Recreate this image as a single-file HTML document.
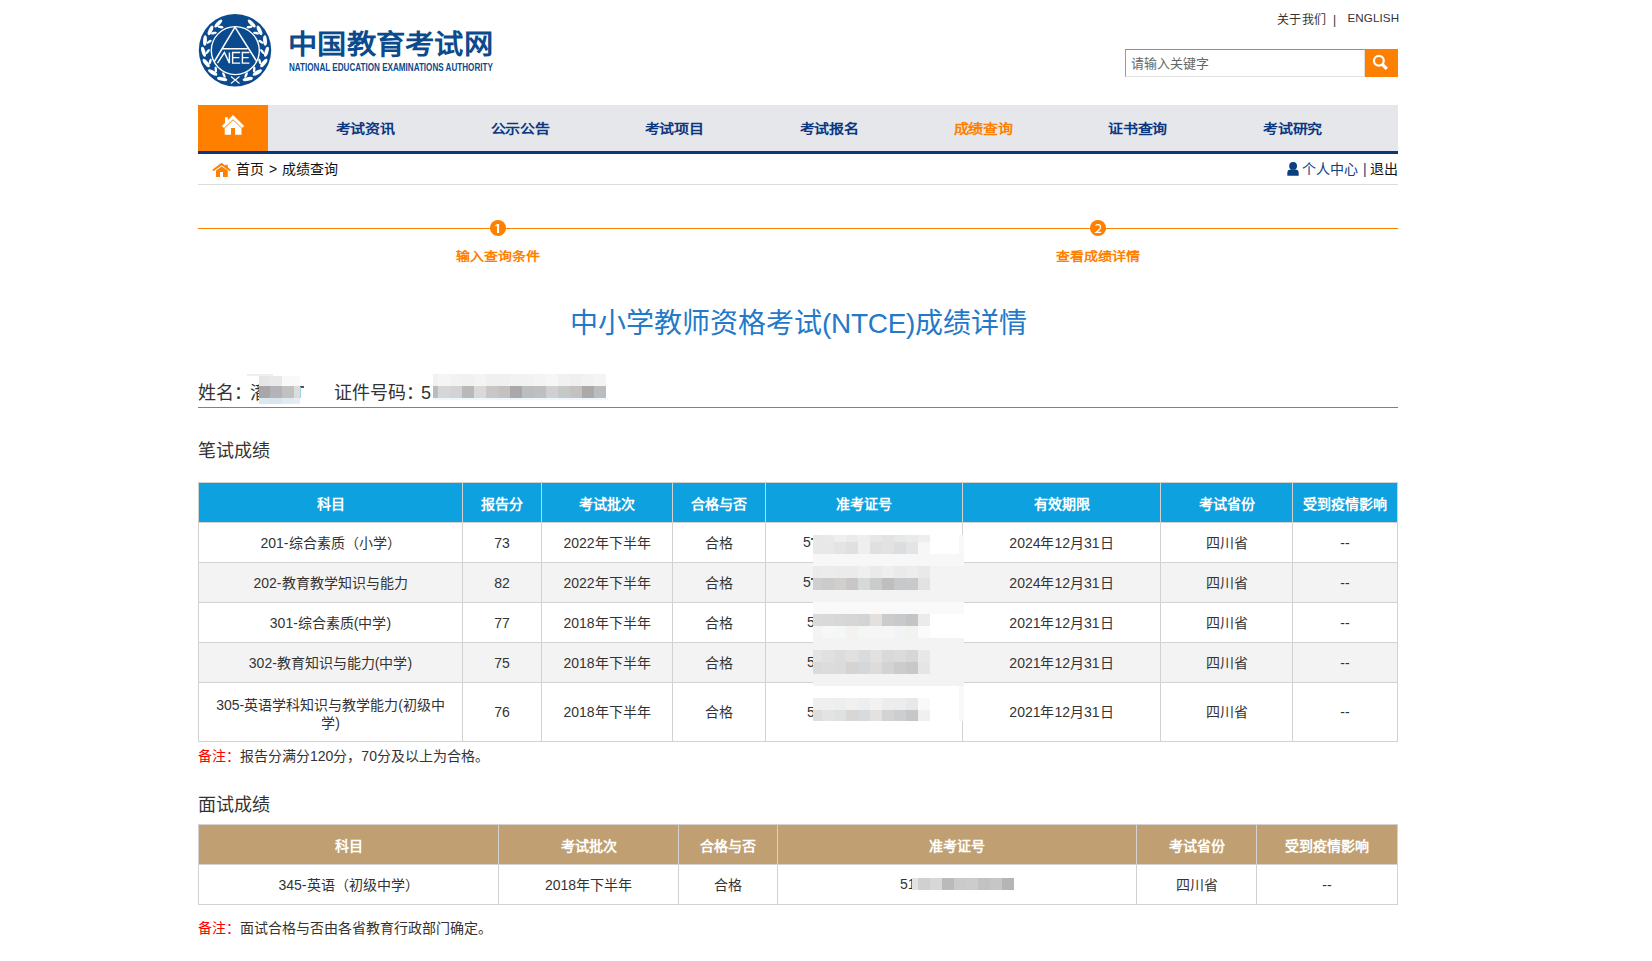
<!DOCTYPE html>
<html lang="zh-CN">
<head>
<meta charset="utf-8">
<style>
*{margin:0;padding:0;box-sizing:border-box;}
html,body{width:1652px;height:961px;overflow:hidden;background:#fff;}
body{font-family:"Liberation Sans",sans-serif;color:#333;position:relative;}
.abs{position:absolute;white-space:nowrap;}
.tl{top:10.5px;font-size:12px;line-height:18px;color:#333;}
#search{left:1125px;top:49px;width:240px;height:28px;border:1px solid;border-color:#8f8f8f #dcdcdc #e0e0e0 #9a9a9a;background:#fff;}
#search span{position:absolute;left:5px;top:5.5px;font-size:13px;line-height:16px;color:#666;}
#sbtn{left:1365px;top:49px;width:33px;height:28px;background:#ff7f00;}
#nav{left:198px;top:105px;width:1200px;height:46px;background:#e6e7eb;}
#navline{left:198px;top:151px;width:1200px;height:3px;background:#073a7d;}
#home{left:198px;top:105px;width:70px;height:46px;background:#ff7f00;}
.nv{top:118px;font-size:15px;line-height:22px;font-weight:bold;color:#0b3781;transform:scaleY(0.85);transform-origin:0 50%;letter-spacing:-0.2px;}
#crumbline{left:198px;top:184px;width:1200px;height:1px;background:#dcdcdc;}
.crumbt{top:160px;font-size:14px;line-height:18px;color:#111;}
#user{right:254px;top:160px;font-size:14px;line-height:18px;color:#222;}
#stepline{left:198px;top:228px;width:1200px;height:1px;background:#ff8000;}
.dot{width:16px;height:16px;border-radius:50%;background:#ff7f00;color:#fff;font-size:12px;line-height:16px;text-align:center;font-weight:bold;top:220px;font-family:"Liberation Sans",sans-serif;}
.steplbl{top:247px;font-size:14px;line-height:18px;font-weight:bold;color:#ff7f00;transform:scaleY(0.88);transform-origin:0 100%;}
#title{left:570px;top:305px;font-size:28px;line-height:38px;color:#2479c9;}
.info{top:381.5px;font-size:18px;line-height:22px;color:#333;}
#infoline{left:198px;top:407px;width:1200px;height:1px;background:#00adee;}
.sec{left:198px;font-size:18px;line-height:22px;color:#333;}
table{position:absolute;left:198px;width:1199px;border-collapse:collapse;table-layout:fixed;font-size:14px;color:#333;}
td,th{border:1px solid #d2d2d2;text-align:center;vertical-align:middle;}
th{color:#fff;font-weight:bold;height:40px;}
td{height:40px;line-height:18px;}
#t1{top:482px;}
#t1 th{background:#0ea1e0;}
#t2{top:824px;}
#t2 th{background:#c0a073;}
tr.g td{background:#f3f3f3;}
.mz{position:absolute;}
.cell{font-size:14px;line-height:18px;color:#333;}
.note{left:198px;font-size:14px;line-height:18px;color:#333;}
.note b{color:#f00;font-weight:normal;}
</style>
</head>
<body>
<!-- logo -->
<svg class="abs" style="left:197px;top:12px" width="78" height="78" viewBox="0 0 78 78">
  <circle cx="38" cy="38.2" r="36.2" fill="#0b4a8d"/>
  <g fill="#fff"><ellipse cx="25.2" cy="67.0" rx="5.2" ry="1.9" transform="rotate(190 25.2 67.0)"/><ellipse cx="26.9" cy="63.0" rx="3.0" ry="1.25" transform="rotate(244 26.9 63.0)"/><ellipse cx="15.7" cy="60.5" rx="5.2" ry="1.9" transform="rotate(211 15.7 60.5)"/><ellipse cx="18.8" cy="57.4" rx="3.0" ry="1.25" transform="rotate(265 18.8 57.4)"/><ellipse cx="9.2" cy="51.0" rx="5.2" ry="1.9" transform="rotate(232 9.2 51.0)"/><ellipse cx="13.2" cy="49.3" rx="3.0" ry="1.25" transform="rotate(286 13.2 49.3)"/><ellipse cx="6.5" cy="39.8" rx="5.2" ry="1.9" transform="rotate(253 6.5 39.8)"/><ellipse cx="10.8" cy="39.6" rx="3.0" ry="1.25" transform="rotate(307 10.8 39.6)"/><ellipse cx="8.0" cy="28.5" rx="5.2" ry="1.9" transform="rotate(274 8.0 28.5)"/><ellipse cx="12.1" cy="29.8" rx="3.0" ry="1.25" transform="rotate(328 12.1 29.8)"/><ellipse cx="13.5" cy="18.4" rx="5.2" ry="1.9" transform="rotate(295 13.5 18.4)"/><ellipse cx="16.9" cy="21.1" rx="3.0" ry="1.25" transform="rotate(349 16.9 21.1)"/><ellipse cx="21.3" cy="11.5" rx="5.2" ry="1.9" transform="rotate(314 21.3 11.5)"/><ellipse cx="23.6" cy="15.1" rx="3.0" ry="1.25" transform="rotate(368 23.6 15.1)"/><ellipse cx="50.8" cy="67.0" rx="5.2" ry="1.9" transform="rotate(-10 50.8 67.0)"/><ellipse cx="49.1" cy="63.0" rx="3.0" ry="1.25" transform="rotate(-64 49.1 63.0)"/><ellipse cx="60.3" cy="60.5" rx="5.2" ry="1.9" transform="rotate(-31 60.3 60.5)"/><ellipse cx="57.2" cy="57.4" rx="3.0" ry="1.25" transform="rotate(-85 57.2 57.4)"/><ellipse cx="66.8" cy="51.0" rx="5.2" ry="1.9" transform="rotate(-52 66.8 51.0)"/><ellipse cx="62.8" cy="49.3" rx="3.0" ry="1.25" transform="rotate(-106 62.8 49.3)"/><ellipse cx="69.5" cy="39.8" rx="5.2" ry="1.9" transform="rotate(-73 69.5 39.8)"/><ellipse cx="65.2" cy="39.6" rx="3.0" ry="1.25" transform="rotate(-127 65.2 39.6)"/><ellipse cx="68.0" cy="28.5" rx="5.2" ry="1.9" transform="rotate(-94 68.0 28.5)"/><ellipse cx="63.9" cy="29.8" rx="3.0" ry="1.25" transform="rotate(-148 63.9 29.8)"/><ellipse cx="62.5" cy="18.4" rx="5.2" ry="1.9" transform="rotate(-115 62.5 18.4)"/><ellipse cx="59.1" cy="21.1" rx="3.0" ry="1.25" transform="rotate(-169 59.1 21.1)"/><ellipse cx="54.7" cy="11.5" rx="5.2" ry="1.9" transform="rotate(-134 54.7 11.5)"/><ellipse cx="52.4" cy="15.1" rx="3.0" ry="1.25" transform="rotate(-188 52.4 15.1)"/></g>
  <circle cx="38.3" cy="38.6" r="24" fill="none" stroke="#fff" stroke-width="1.4"/>
  <path d="M17.4,49.5 L38,15.2 L59.8,49.5 M24.9,36.7 H50.5" fill="none" stroke="#fff" stroke-width="1.5"/>
  <path d="M20.5,51.1 L27.4,40.5 L32.4,51.1 L32.4,40.5 M43.2,40.5 H35.6 V51.1 H43.2 M35.6,45.6 H42.4 M52.4,40.5 H45.4 V51.1 H52.4 M45.4,45.6 H51.6" fill="none" stroke="#fff" stroke-width="1.4"/>
  <path d="M34,64.5 L42.5,71.5 M42.5,64.5 L34,71.5" stroke="#fff" stroke-width="1.1"/>
</svg>
<div class="abs" id="logotxt" style="left:288px;top:29px;font-size:29px;line-height:34px;font-weight:900;color:#0b4a8c;transform:scale(1.01,0.93);transform-origin:0 0;">中国教育考试网</div>
<div class="abs" id="entxt" style="left:289px;top:62px;font-size:10px;line-height:11px;font-weight:bold;color:#0b4a8c;transform:scaleX(0.81);transform-origin:0 0;">NATIONAL EDUCATION EXAMINATIONS AUTHORITY</div>

<div class="abs tl" style="left:1277px;letter-spacing:0.3px">关于我们</div><div class="abs tl" style="left:1333px">|</div><div class="abs tl" style="left:1347.5px;top:9px;font-size:11.6px;letter-spacing:0.1px">ENGLISH</div>
<div class="abs" id="search"><span>请输入关键字</span></div>
<div class="abs" id="sbtn"><svg width="33" height="28" viewBox="0 0 33 28"><circle cx="13.9" cy="11.8" r="4.9" fill="none" stroke="#fff" stroke-width="2.2"/><path d="M17.3,15.3 L21.8,19.8" stroke="#fff" stroke-width="3.2"/></svg></div>

<div class="abs" id="nav"></div>
<div class="abs" id="home"></div>
<svg class="abs" style="left:215px;top:108px" width="35" height="32" viewBox="0 0 35 32"><path d="M7.9,19 L18,9.1 L28.1,19" fill="none" stroke="#fff" stroke-width="3"/><rect x="10" y="9.2" width="2.8" height="6" fill="#fff"/><path d="M9.7,26.8 V20.3 L18,12.3 L26.5,20.3 V26.8 H20 V20 H16 V26.8 Z" fill="#fff"/></svg>
<div class="abs" id="navline"></div>
<div class="abs nv" style="left:335.5px">考试资讯</div>
<div class="abs nv" style="left:490.5px">公示公告</div>
<div class="abs nv" style="left:644.5px">考试项目</div>
<div class="abs nv" style="left:799.5px">考试报名</div>
<div class="abs nv" style="left:953.5px;color:#ff7f00">成绩查询</div>
<div class="abs nv" style="left:1108px">证书查询</div>
<div class="abs nv" style="left:1263px">考试研究</div>

<svg class="abs" style="left:208px;top:158px" width="32" height="24" viewBox="0 0 32 24"><path d="M5.5,12 L13.6,6.1 L21.7,12" fill="none" stroke="#ff7f00" stroke-width="2" stroke-linecap="round"/><rect x="17.5" y="6.8" width="2.3" height="3.5" fill="#ff7f00"/><path d="M8,19 V12.4 L13.7,8.4 L19.75,12.4 V19 H15 V14 H12 V19 Z" fill="#ff7f00"/></svg>
<div class="abs crumbt" style="left:235.5px">首页</div><div class="abs crumbt" style="left:269px">&gt;</div><div class="abs crumbt" style="left:281.5px">成绩查询</div>
<svg class="abs" style="left:1285px;top:160px" width="16" height="18" viewBox="1285 160 16 18"><circle cx="1293.1" cy="165.9" r="3.9" fill="#0b3f80"/><path d="M1287.3,175.7 V173 Q1287.3,169.6 1290.8,169.6 H1295.2 Q1298.7,169.6 1298.7,173 V175.7 Z" fill="#0b3f80"/></svg>
<div class="abs crumbt" style="left:1302px;color:#0b3f80">个人中心</div><div class="abs crumbt" style="left:1363px;color:#0b3f80">|</div><div class="abs crumbt" style="left:1370px">退出</div>
<div class="abs" id="crumbline"></div>

<div class="abs" id="stepline"></div>
<div class="abs dot" style="left:490px"></div><svg class="abs" style="left:490px;top:220px" width="16" height="16" viewBox="490 220 16 16"><path d="M497,224 H499.1 V233 H497 V226.2 L495.2,226.2 L495.2,225.3 Q496.6,225 497,224 Z" fill="#fff"/></svg>
<div class="abs dot" style="left:1090px"></div><svg class="abs" style="left:1090px;top:220px" width="16" height="16" viewBox="1090 220 16 16"><path d="M1095.4,225.6 Q1096.5,224.6 1098,224.6 Q1100.6,224.6 1100.6,226.9 Q1100.6,228.6 1098.3,230.5 L1096,232.4 H1101.1" fill="none" stroke="#fff" stroke-width="1.25"/></svg>
<div class="abs steplbl" style="left:456px">输入查询条件</div>
<div class="abs steplbl" style="left:1056px">查看成绩详情</div>

<div class="abs" id="title">中小学教师资格考试<span style="letter-spacing:-0.3px">(NTCE)</span>成绩详情</div>
<div class="abs info" style="left:198px">姓名：</div><div class="abs info" style="left:250px">潘</div><div class="abs info" style="left:334px">证件号码：</div><div class="abs info" style="left:421px">5</div>
<div class="abs" id="infoline"></div>

<div class="abs sec" style="top:440px">笔试成绩</div>
<table id="t1">
<colgroup><col style="width:264px"><col style="width:79px"><col style="width:131px"><col style="width:93px"><col style="width:197px"><col style="width:198px"><col style="width:132px"><col style="width:105px"></colgroup>
<tr><th>科目</th><th>报告分</th><th>考试批次</th><th>合格与否</th><th>准考证号</th><th>有效期限</th><th>考试省份</th><th>受到疫情影响</th></tr>
<tr><td>201-综合素质（小学）</td><td>73</td><td>2022年下半年</td><td>合格</td><td></td><td>2024年12月31日</td><td>四川省</td><td>--</td></tr>
<tr class="g"><td>202-教育教学知识与能力</td><td>82</td><td>2022年下半年</td><td>合格</td><td></td><td>2024年12月31日</td><td>四川省</td><td>--</td></tr>
<tr><td>301-综合素质(中学)</td><td>77</td><td>2018年下半年</td><td>合格</td><td></td><td>2021年12月31日</td><td>四川省</td><td>--</td></tr>
<tr class="g"><td>302-教育知识与能力(中学)</td><td>75</td><td>2018年下半年</td><td>合格</td><td></td><td>2021年12月31日</td><td>四川省</td><td>--</td></tr>
<tr><td style="height:59px;padding-top:3px">305-英语学科知识与教学能力(初级中<br>学)</td><td>76</td><td>2018年下半年</td><td>合格</td><td></td><td>2021年12月31日</td><td>四川省</td><td>--</td></tr>
</table>
<div class="abs note" style="top:747px"><b>备注：</b>报告分满分120分，70分及以上为合格。</div>

<div class="abs sec" style="top:793.5px">面试成绩</div>
<table id="t2">
<colgroup><col style="width:300px"><col style="width:180px"><col style="width:99px"><col style="width:359px"><col style="width:120px"><col style="width:141px"></colgroup>
<tr><th>科目</th><th>考试批次</th><th>合格与否</th><th>准考证号</th><th>考试省份</th><th>受到疫情影响</th></tr>
<tr><td>345-英语（初级中学）</td><td>2018年下半年</td><td>合格</td><td></td><td>四川省</td><td>--</td></tr>
</table>
<div class="abs note" style="top:919px"><b>备注：</b>面试合格与否由各省教育行政部门确定。</div>
<div class="abs cell" style="left:803px;top:533px">5</div><div class="abs cell" style="left:803px;top:573px">5</div><div class="abs cell" style="left:807px;top:613px">5</div><div class="abs cell" style="left:807px;top:653px">5</div><div class="abs cell" style="left:807px;top:703px">5</div><div class="mz" style="left:811px;top:538px;width:1.5px;height:1.5px;background:#555"></div><div class="mz" style="left:811px;top:578px;width:1.5px;height:1.5px;background:#555"></div><div class="abs cell" style="left:900px;top:875px">51</div><div class="mz" style="left:247px;top:374px;width:26px;height:2px;background:#eeeeee"></div><div class="mz" style="left:259px;top:376px;width:11px;height:10px;background:#e6e6e6"></div><div class="mz" style="left:270px;top:376px;width:12px;height:10px;background:#e9e9e9"></div><div class="mz" style="left:282px;top:376px;width:12px;height:10px;background:#f9f9f9"></div><div class="mz" style="left:294px;top:376px;width:6px;height:10px;background:#f9f9f9"></div><div class="mz" style="left:259px;top:386px;width:11px;height:12px;background:#a9a7a6"></div><div class="mz" style="left:270px;top:386px;width:12px;height:12px;background:#b4b4b8"></div><div class="mz" style="left:282px;top:386px;width:12px;height:12px;background:#c1c1c1"></div><div class="mz" style="left:294px;top:386px;width:6px;height:12px;background:#dddcdc"></div><div class="mz" style="left:259px;top:398px;width:11px;height:6px;background:#dce8ef"></div><div class="mz" style="left:270px;top:398px;width:12px;height:6px;background:#d8e5ed"></div><div class="mz" style="left:282px;top:398px;width:12px;height:6px;background:#e0ecf2"></div><div class="mz" style="left:294px;top:398px;width:6px;height:6px;background:#e2eef4"></div><div class="mz" style="left:300px;top:386px;width:4px;height:1.5px;background:#555"></div><div class="mz" style="left:300px;top:387px;width:1px;height:11px;background:#9bd4f0"></div><div class="mz" style="left:433px;top:374px;width:5px;height:12px;background:#f1f1f1"></div><div class="mz" style="left:438px;top:374px;width:12px;height:12px;background:#f5f5f5"></div><div class="mz" style="left:450px;top:374px;width:12px;height:12px;background:#f2f2f2"></div><div class="mz" style="left:462px;top:374px;width:12px;height:12px;background:#f1f1f1"></div><div class="mz" style="left:474px;top:374px;width:12px;height:12px;background:#f4f4f3"></div><div class="mz" style="left:486px;top:374px;width:12px;height:12px;background:#f0f0f0"></div><div class="mz" style="left:498px;top:374px;width:12px;height:12px;background:#f0f0f0"></div><div class="mz" style="left:510px;top:374px;width:12px;height:12px;background:#f1f2f2"></div><div class="mz" style="left:522px;top:374px;width:12px;height:12px;background:#f2f2f2"></div><div class="mz" style="left:534px;top:374px;width:12px;height:12px;background:#f4f4f4"></div><div class="mz" style="left:546px;top:374px;width:12px;height:12px;background:#f6f6f6"></div><div class="mz" style="left:558px;top:374px;width:12px;height:12px;background:#f1f1f1"></div><div class="mz" style="left:570px;top:374px;width:12px;height:12px;background:#efefef"></div><div class="mz" style="left:582px;top:374px;width:12px;height:12px;background:#f1f2f2"></div><div class="mz" style="left:594px;top:374px;width:12px;height:12px;background:#f4f4f4"></div><div class="mz" style="left:433px;top:386px;width:5px;height:12px;background:#bcbcbe"></div><div class="mz" style="left:438px;top:386px;width:12px;height:12px;background:#d6d6d6"></div><div class="mz" style="left:450px;top:386px;width:12px;height:12px;background:#d3d3d3"></div><div class="mz" style="left:462px;top:386px;width:12px;height:12px;background:#b9b9b9"></div><div class="mz" style="left:474px;top:386px;width:12px;height:12px;background:#d9d9da"></div><div class="mz" style="left:486px;top:386px;width:12px;height:12px;background:#c8c6c7"></div><div class="mz" style="left:498px;top:386px;width:12px;height:12px;background:#c3c2c1"></div><div class="mz" style="left:510px;top:386px;width:12px;height:12px;background:#aaa8a9"></div><div class="mz" style="left:522px;top:386px;width:12px;height:12px;background:#bbbdbf"></div><div class="mz" style="left:534px;top:386px;width:12px;height:12px;background:#c0bfbf"></div><div class="mz" style="left:546px;top:386px;width:12px;height:12px;background:#d0d0d0"></div><div class="mz" style="left:558px;top:386px;width:12px;height:12px;background:#c6c7c7"></div><div class="mz" style="left:570px;top:386px;width:12px;height:12px;background:#c4c2c1"></div><div class="mz" style="left:582px;top:386px;width:12px;height:12px;background:#aba9aa"></div><div class="mz" style="left:594px;top:386px;width:12px;height:12px;background:#babcbd"></div><div class="mz" style="left:433px;top:398px;width:175px;height:2px;background:#eef7fc"></div><div class="mz" style="left:813px;top:535px;width:151px;height:19px;background:#fff"></div><div class="mz" style="left:959px;top:535px;width:5px;height:186px;background:#f8f8f8"></div><div class="mz" style="left:813px;top:554px;width:151px;height:12px;background:#f7f7f7"></div><div class="mz" style="left:813px;top:535px;width:9px;height:7px;background:#e8e8e8"></div><div class="mz" style="left:822px;top:535px;width:12px;height:7px;background:#e9e9e9"></div><div class="mz" style="left:834px;top:535px;width:12px;height:7px;background:#efefef"></div><div class="mz" style="left:846px;top:535px;width:12px;height:7px;background:#eaeae9"></div><div class="mz" style="left:858px;top:535px;width:12px;height:7px;background:#eceef0"></div><div class="mz" style="left:870px;top:535px;width:12px;height:7px;background:#e8e7e5"></div><div class="mz" style="left:882px;top:535px;width:12px;height:7px;background:#e4e3e1"></div><div class="mz" style="left:894px;top:535px;width:12px;height:7px;background:#e6e7e8"></div><div class="mz" style="left:906px;top:535px;width:12px;height:7px;background:#e9eaea"></div><div class="mz" style="left:918px;top:535px;width:12px;height:7px;background:#eeeeee"></div><div class="mz" style="left:813px;top:542px;width:9px;height:12px;background:#e8e8e8"></div><div class="mz" style="left:822px;top:542px;width:12px;height:12px;background:#e8e8e8"></div><div class="mz" style="left:834px;top:542px;width:12px;height:12px;background:#e5e4e3"></div><div class="mz" style="left:846px;top:542px;width:12px;height:12px;background:#dfe0e0"></div><div class="mz" style="left:858px;top:542px;width:12px;height:12px;background:#efefee"></div><div class="mz" style="left:870px;top:542px;width:12px;height:12px;background:#dfe0e2"></div><div class="mz" style="left:882px;top:542px;width:12px;height:12px;background:#e3e2e0"></div><div class="mz" style="left:894px;top:542px;width:12px;height:12px;background:#dcdddf"></div><div class="mz" style="left:906px;top:542px;width:12px;height:12px;background:#e3e4e6"></div><div class="mz" style="left:918px;top:542px;width:12px;height:12px;background:#f7f7f7"></div><div class="mz" style="left:813px;top:566px;width:151px;height:36px;background:#f3f3f3"></div><div class="mz" style="left:813px;top:566px;width:9px;height:12px;background:#ebebeb"></div><div class="mz" style="left:822px;top:566px;width:12px;height:12px;background:#ececec"></div><div class="mz" style="left:834px;top:566px;width:12px;height:12px;background:#ebebeb"></div><div class="mz" style="left:846px;top:566px;width:12px;height:12px;background:#eaebea"></div><div class="mz" style="left:858px;top:566px;width:12px;height:12px;background:#efefef"></div><div class="mz" style="left:870px;top:566px;width:12px;height:12px;background:#eaeaea"></div><div class="mz" style="left:882px;top:566px;width:12px;height:12px;background:#edeeed"></div><div class="mz" style="left:894px;top:566px;width:12px;height:12px;background:#eaeaea"></div><div class="mz" style="left:906px;top:566px;width:12px;height:12px;background:#ecedec"></div><div class="mz" style="left:918px;top:566px;width:12px;height:12px;background:#e9e9e9"></div><div class="mz" style="left:813px;top:578px;width:9px;height:12px;background:#cfcfcf"></div><div class="mz" style="left:822px;top:578px;width:12px;height:12px;background:#cbcbcb"></div><div class="mz" style="left:834px;top:578px;width:12px;height:12px;background:#d0cfce"></div><div class="mz" style="left:846px;top:578px;width:12px;height:12px;background:#c8c7c6"></div><div class="mz" style="left:858px;top:578px;width:12px;height:12px;background:#d7d8d8"></div><div class="mz" style="left:870px;top:578px;width:12px;height:12px;background:#cacbcb"></div><div class="mz" style="left:882px;top:578px;width:12px;height:12px;background:#c0bebc"></div><div class="mz" style="left:894px;top:578px;width:12px;height:12px;background:#c7c8ca"></div><div class="mz" style="left:906px;top:578px;width:12px;height:12px;background:#c8c9cb"></div><div class="mz" style="left:918px;top:578px;width:12px;height:12px;background:#e2e2e2"></div><div class="mz" style="left:813px;top:602px;width:151px;height:12px;background:#f9f9f9"></div><div class="mz" style="left:813px;top:614px;width:151px;height:24px;background:#fff"></div><div class="mz" style="left:813px;top:614px;width:9px;height:12px;background:#d9dadb"></div><div class="mz" style="left:822px;top:614px;width:12px;height:12px;background:#d9d9d9"></div><div class="mz" style="left:834px;top:614px;width:12px;height:12px;background:#d6d7d8"></div><div class="mz" style="left:846px;top:614px;width:12px;height:12px;background:#d8d6d5"></div><div class="mz" style="left:858px;top:614px;width:12px;height:12px;background:#d3d4d6"></div><div class="mz" style="left:870px;top:614px;width:12px;height:12px;background:#e3e0de"></div><div class="mz" style="left:882px;top:614px;width:12px;height:12px;background:#cbcbcb"></div><div class="mz" style="left:894px;top:614px;width:12px;height:12px;background:#c7cacc"></div><div class="mz" style="left:906px;top:614px;width:12px;height:12px;background:#c4c4c4"></div><div class="mz" style="left:918px;top:614px;width:12px;height:12px;background:#eaebec"></div><div class="mz" style="left:813px;top:626px;width:9px;height:12px;background:#f4f4f4"></div><div class="mz" style="left:822px;top:626px;width:12px;height:12px;background:#f7f7f7"></div><div class="mz" style="left:834px;top:626px;width:12px;height:12px;background:#f5f6f6"></div><div class="mz" style="left:846px;top:626px;width:12px;height:12px;background:#f3f2f1"></div><div class="mz" style="left:858px;top:626px;width:12px;height:12px;background:#f4f5f5"></div><div class="mz" style="left:870px;top:626px;width:12px;height:12px;background:#f5f5f5"></div><div class="mz" style="left:882px;top:626px;width:12px;height:12px;background:#f6f6f5"></div><div class="mz" style="left:894px;top:626px;width:12px;height:12px;background:#f1f3f4"></div><div class="mz" style="left:906px;top:626px;width:12px;height:12px;background:#f2f2f1"></div><div class="mz" style="left:918px;top:626px;width:12px;height:12px;background:#fbfbfb"></div><div class="mz" style="left:813px;top:638px;width:151px;height:48px;background:#f3f3f3"></div><div class="mz" style="left:813px;top:650px;width:9px;height:12px;background:#e4e4e4"></div><div class="mz" style="left:822px;top:650px;width:12px;height:12px;background:#e0e0e0"></div><div class="mz" style="left:834px;top:650px;width:12px;height:12px;background:#dcdcdd"></div><div class="mz" style="left:846px;top:650px;width:12px;height:12px;background:#e0e0e0"></div><div class="mz" style="left:858px;top:650px;width:12px;height:12px;background:#dadbdc"></div><div class="mz" style="left:870px;top:650px;width:12px;height:12px;background:#e2e1e0"></div><div class="mz" style="left:882px;top:650px;width:12px;height:12px;background:#d9d9d9"></div><div class="mz" style="left:894px;top:650px;width:12px;height:12px;background:#dbdbdc"></div><div class="mz" style="left:906px;top:650px;width:12px;height:12px;background:#d6d6d6"></div><div class="mz" style="left:918px;top:650px;width:12px;height:12px;background:#e8e8e8"></div><div class="mz" style="left:813px;top:662px;width:9px;height:12px;background:#d9dadb"></div><div class="mz" style="left:822px;top:662px;width:12px;height:12px;background:#dcdcdc"></div><div class="mz" style="left:834px;top:662px;width:12px;height:12px;background:#dbdbdb"></div><div class="mz" style="left:846px;top:662px;width:12px;height:12px;background:#d5d4d3"></div><div class="mz" style="left:858px;top:662px;width:12px;height:12px;background:#d6d7d9"></div><div class="mz" style="left:870px;top:662px;width:12px;height:12px;background:#dddcdb"></div><div class="mz" style="left:882px;top:662px;width:12px;height:12px;background:#d3d3d3"></div><div class="mz" style="left:894px;top:662px;width:12px;height:12px;background:#cbcccd"></div><div class="mz" style="left:906px;top:662px;width:12px;height:12px;background:#c8c8c8"></div><div class="mz" style="left:918px;top:662px;width:12px;height:12px;background:#e4e5e6"></div><div class="mz" style="left:813px;top:686px;width:146px;height:35px;background:#fff"></div><div class="mz" style="left:813px;top:698px;width:9px;height:12px;background:#efefef"></div><div class="mz" style="left:822px;top:698px;width:12px;height:12px;background:#efefef"></div><div class="mz" style="left:834px;top:698px;width:12px;height:12px;background:#edeeee"></div><div class="mz" style="left:846px;top:698px;width:12px;height:12px;background:#f0f0ef"></div><div class="mz" style="left:858px;top:698px;width:12px;height:12px;background:#edeeee"></div><div class="mz" style="left:870px;top:698px;width:12px;height:12px;background:#f3f2f1"></div><div class="mz" style="left:882px;top:698px;width:12px;height:12px;background:#eceded"></div><div class="mz" style="left:894px;top:698px;width:12px;height:12px;background:#ebeced"></div><div class="mz" style="left:906px;top:698px;width:12px;height:12px;background:#e8e8e8"></div><div class="mz" style="left:918px;top:698px;width:12px;height:12px;background:#f9f9f9"></div><div class="mz" style="left:813px;top:710px;width:9px;height:11px;background:#dcdddf"></div><div class="mz" style="left:822px;top:710px;width:12px;height:11px;background:#e3e3e2"></div><div class="mz" style="left:834px;top:710px;width:12px;height:11px;background:#dfe0e0"></div><div class="mz" style="left:846px;top:710px;width:12px;height:11px;background:#d8d7d6"></div><div class="mz" style="left:858px;top:710px;width:12px;height:11px;background:#d9dadc"></div><div class="mz" style="left:870px;top:710px;width:12px;height:11px;background:#e4e2e0"></div><div class="mz" style="left:882px;top:710px;width:12px;height:11px;background:#d3d3d3"></div><div class="mz" style="left:894px;top:710px;width:12px;height:11px;background:#cdced0"></div><div class="mz" style="left:906px;top:710px;width:12px;height:11px;background:#c7c7c8"></div><div class="mz" style="left:918px;top:710px;width:12px;height:11px;background:#eff0f0"></div><div class="mz" style="left:912px;top:878px;width:6px;height:12px;background:#e1e2e4"></div><div class="mz" style="left:918px;top:878px;width:12px;height:12px;background:#d1d0cf"></div><div class="mz" style="left:930px;top:878px;width:12px;height:12px;background:#d7d7d7"></div><div class="mz" style="left:942px;top:878px;width:12px;height:12px;background:#bababa"></div><div class="mz" style="left:954px;top:878px;width:12px;height:12px;background:#c9cacb"></div><div class="mz" style="left:966px;top:878px;width:12px;height:12px;background:#cdccca"></div><div class="mz" style="left:978px;top:878px;width:12px;height:12px;background:#c1c2c3"></div><div class="mz" style="left:990px;top:878px;width:12px;height:12px;background:#c8c6c5"></div><div class="mz" style="left:1002px;top:878px;width:12px;height:12px;background:#b5b5b5"></div>
</body>
</html>
